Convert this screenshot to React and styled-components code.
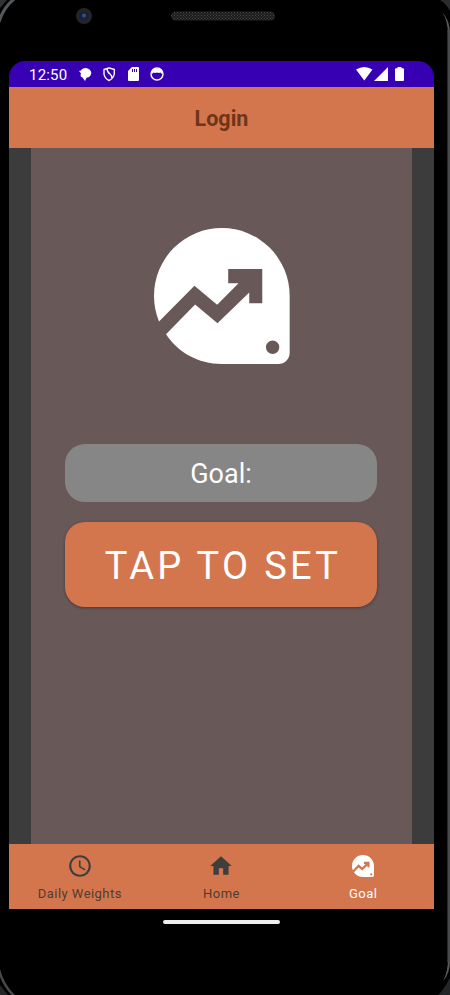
import React from "react";
import styled, { createGlobalStyle } from "styled-components";

const Global = createGlobalStyle`
  * { box-sizing: border-box; }
  body { margin: 0; background: #000; font-family: Roboto, sans-serif; }
`;
const Device = styled.div`
  position: relative;
  width: 450px;
  height: 995px;
  padding: 0 16px 0 9px;
  background: #000;
  overflow: hidden;
  display: flex;
  flex-direction: column;
`;
const Bezel = styled.svg`
  position: absolute;
  inset: 0;
  pointer-events: none;
`;
const TopBezel = styled.div`
  height: 61px;
  flex: none;
`;
const StatusBar = styled.div`
  height: 26px;
  flex: none;
  background: #3700b3;
  border-radius: 16px 16px 0 0;
  display: flex;
  align-items: center;
  justify-content: space-between;
  padding: 0 29px 0 20px;
  color: #fff;
`;
const Clock = styled.span`
  font-size: 15px;
  letter-spacing: 0.2px;
  line-height: 26px;
  width: 48px;
  padding-top: 1px;
`;
const StatusGroup = styled.div`
  display: flex;
  align-items: center;
`;
const StatusIcon = styled.svg`
  display: block;
  width: ${(p) => p.$w}px;
  height: 16px;
`;
const Header = styled.header`
  height: 61px;
  flex: none;
  background: #d4764d;
  display: flex;
  align-items: center;
  justify-content: center;
`;
const Title = styled.h1`
  margin: 2px 0 0;
  font-size: 21.5px;
  line-height: 28px;
  font-weight: 700;
  color: #6e3519;
`;
const Main = styled.main`
  height: 696px;
  flex: none;
  background: #3c3c3c;
  padding: 0 22px;
`;
const Content = styled.section`
  height: 100%;
  background: #685857;
  display: flex;
  flex-direction: column;
  align-items: center;
  padding: 80px 35px 0 34px;
`;
const LogoSvg = styled.svg`
  display: block;
  width: ${(p) => p.$size}px;
  height: ${(p) => p.$size}px;
  margin-left: ${(p) => p.$nudge || 0}px;
`;
const GoalField = styled.div`
  width: 100%;
  height: 58px;
  margin-top: 80px;
  border-radius: 20px;
  background: #868686;
  color: #fff;
  font-size: 27px;
  display: flex;
  align-items: center;
  justify-content: center;
  padding-top: 2px;
`;
const SetButton = styled.button`
  width: 100%;
  height: 85px;
  margin-top: 20px;
  border: 0;
  border-radius: 20px;
  background: #d4764d;
  color: #fff;
  font: 400 38px Roboto, sans-serif;
  letter-spacing: 3.3px;
  padding: 2px 0 0 4px;
  white-space: nowrap;
  box-shadow: 0 1px 3px rgba(0, 0, 0, 0.35);
`;
const Nav = styled.nav`
  height: 65px;
  flex: none;
  background: #d4764d;
  display: grid;
  grid-template-columns: repeat(3, 1fr);
`;
const Tab = styled.a`
  display: flex;
  flex-direction: column;
  align-items: center;
  padding-top: 9px;
  color: ${(p) => (p.$active ? "#fff" : "#513c31")};
`;
const IconSlot = styled.span`
  height: 26px;
  display: flex;
  align-items: center;
`;
const TabLabel = styled.span`
  margin-top: 6px;
  font-size: 13px;
  line-height: 17px;
  letter-spacing: 0.45px;
`;
const HomePill = styled.div`
  width: 117px;
  height: 4px;
  flex: none;
  margin: 11px 0 0 154px;
  border-radius: 2px;
  background: #f1edf1;
`;

function GoalLogo({ size, nudge }) {
  return (
    <LogoSvg $size={size} $nudge={nudge} viewBox="42 39 407 407">
      <path
        fill="#fff"
        fillRule="evenodd"
        d="M57 319 163 212 231 269 295 204H264V162H366V264H327V232L232 324 165 268 78 357C112 410 174 446 245 446H414A34 34 0 0 0 448 412V242A203 203 0 0 0 42 242C42 269 47 295 57 319ZM417 396A20 20 0 1 1 377 396A20 20 0 1 1 417 396Z"
      />
    </LogoSvg>
  );
}

function DeviceFrame() {
  return (
    <Bezel width="450" height="995" viewBox="0 0 450 995">
      <defs>
        <pattern id="mesh" width="3" height="3" patternUnits="userSpaceOnUse">
          <rect width="3" height="3" fill="#1c1c1c" />
          <path d="M0 0h1v1H0zM1.5 1.5h1v1h-1z" fill="#484848" />
        </pattern>
      </defs>
      <path d="M-1 22Q3 8 14 -1" fill="none" stroke="#55585a" strokeWidth="3" />
      <path d="M0 8 7 0H0Z" fill="#303234" />
      <path d="M-1 970Q3 985 14 996" fill="none" stroke="#47484a" strokeWidth="2.5" />
      <path d="M0 985 8 995H0Z" fill="#242526" />
      <path d="M440 0Q447 4 451 13V0Z" fill="#2b2c2e" />
      <path d="M442 12Q448 20 448 36V958Q448 972 443 981Q450 974 450 960V34Q450 20 442 12Z" fill="#58595b" />
      <path d="M448.7 30V962" stroke="#48494b" strokeWidth="2.6" />
      <path d="M451 975Q445 989 437 996H451Z" fill="#242526" />
      <circle cx="84" cy="16" r="8" fill="#252527" />
      <circle cx="84" cy="16" r="4.5" fill="#15203d" />
      <circle cx="84" cy="15.5" r="2" fill="#3c4c7c" />
      <rect x="171" y="11.5" width="104" height="9" rx="4.5" fill="url(#mesh)" />
    </Bezel>
  );
}

export default function App() {
  return (
    <>
      <Global />
      <Device>
        <DeviceFrame />
        <TopBezel />
        <StatusBar>
          <StatusGroup>
            <Clock>12:50</Clock>
            <StatusIcon $w={96} viewBox="77 66 96 16">
              <path fill="#fff" d="M79 71 81 70.5Q82 68 86 68Q91 69 91.3 73Q91 77 86.5 77.8L85 81L82.5 77.5Q80.5 77 80.5 75L81 73.5Z" />
              <path fill="none" stroke="#fff" strokeWidth="1.4" strokeLinejoin="round" d="M104 69.5 109 67.8 114.3 69.5V74Q113.5 78.5 109 80.5Q104.7 78.5 104 74ZM107.2 69Q107 72 110 74Q112 75.5 111.8 78" />
              <path fill="#fff" fillRule="evenodd" d="M132 67H138Q139 67 139 68V80Q139 81 138 81H129Q128 81 128 80V71ZM132 69V72H133V69ZM134 69V72H135V69ZM136 69V72H137V69Z" />
              <circle cx="157" cy="74" r="6" fill="none" stroke="#fff" strokeWidth="1.4" />
              <path fill="#fff" d="M152 74V71L154 69H160L162 71V74L160.5 72.5 159 73 157 72.5 155 73 153.5 72.5Z" />
            </StatusIcon>
          </StatusGroup>
          <StatusIcon $w={49} viewBox="356 66 49 16">
            <path fill="#fff" d="M356 69.5Q364.3 64.5 372.5 69.5L364.3 80.5ZM388 67V81H374ZM397.5 67H401.5V68.2H403Q404 68.2 404 69.2V80Q404 81 403 81H396Q395 81 395 80V69.2Q395 68.2 396 68.2H397.5Z" />
          </StatusIcon>
        </StatusBar>
        <Header>
          <Title>Login</Title>
        </Header>
        <Main>
          <Content>
            <GoalLogo size={136} nudge={2} />
            <GoalField>Goal:</GoalField>
            <SetButton>TAP TO SET</SetButton>
          </Content>
        </Main>
        <Nav>
          <Tab>
            <IconSlot>
              <svg width="26" height="26" viewBox="0 0 24 24" fill="#3f3e3c">
                <path d="M11.99 2C6.47 2 2 6.48 2 12s4.47 10 9.99 10C17.52 22 22 17.52 22 12S17.52 2 11.99 2zM12 20c-4.42 0-8-3.58-8-8s3.58-8 8-8 8 3.58 8 8-3.58 8-8 8zm.5-13H11v6l5.25 3.15.75-1.23-4.5-2.67z" />
              </svg>
            </IconSlot>
            <TabLabel>Daily Weights</TabLabel>
          </Tab>
          <Tab>
            <IconSlot>
              <svg width="26" height="26" viewBox="0 0 24 24" fill="#3f3e3c">
                <path d="M10 20v-6h4v6h5v-8h3L12 3 2 12h3v8z" />
              </svg>
            </IconSlot>
            <TabLabel>Home</TabLabel>
          </Tab>
          <Tab $active>
            <IconSlot>
              <GoalLogo size={22} />
            </IconSlot>
            <TabLabel>Goal</TabLabel>
          </Tab>
        </Nav>
        <HomePill />
      </Device>
    </>
  );
}
